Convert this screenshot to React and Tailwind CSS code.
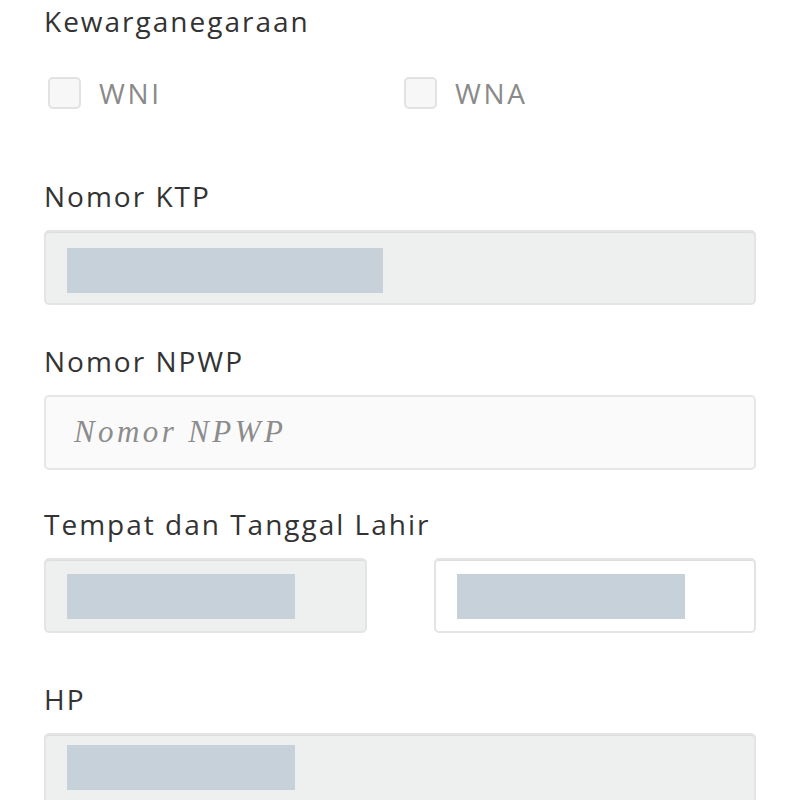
const sans = { fontFamily: '"Open Sans", Lato, sans-serif' };

function Label({ children, className = '' }) {
  return (
    <p className={`text-[28px] leading-[34px] text-[#333333] tracking-[2px] ${className}`}>
      {children}
    </p>
  );
}

function Check({ label }) {
  return (
    <label className="flex items-center gap-[18px] pl-[4px]">
      <span className="w-[33px] h-[32px] rounded-[5px] border-2 border-[#e2e2e2] bg-[#f7f7f7]" />
      <span className="text-[28px] leading-[34px] text-[#8a8a8a] tracking-[2.6px]">{label}</span>
    </label>
  );
}

// gray blocks stand in for the masked values
function Field({ disabled = true, fill, top, className = '' }) {
  return (
    <div
      className={`h-[75px] rounded-[5px] border-2 border-[#e3e4e4] shadow-[inset_0_1px_0_#dcdddd] pl-[21px] ${
        disabled ? 'bg-[#eeefef]' : 'bg-white'
      } ${className}`}
    >
      {fill && <div className="h-[45px] bg-[#c7d1da]" style={{ width: fill, marginTop: top }} />}
    </div>
  );
}

export default function App() {
  return (
    <div className="bg-white w-[800px] h-[800px] overflow-hidden px-[44px] pt-[4px]" style={sans}>
      <Label>Kewarganegaraan</Label>
      <div className="grid grid-cols-2 mt-[38px]">
        <Check label="WNI" />
        <Check label="WNA" />
      </div>

      <Label className="mt-[69px]">Nomor KTP</Label>
      <Field fill={316} top={16} className="mt-[17px]" />

      <Label className="mt-[39px]">Nomor NPWP</Label>
      <div className="mt-[17px] h-[75px] rounded-[5px] border-2 border-[#e5e6e6] bg-[#fafafa] flex items-center pl-[28px]">
        <span
          className="text-[31px] italic text-[#8c8c8c] tracking-[3.4px]"
          style={{ fontFamily: '"Liberation Serif", "DejaVu Serif", serif' }}
        >
          Nomor NPWP
        </span>
      </div>

      <Label className="mt-[37px]">Tempat dan Tanggal Lahir</Label>
      <div className="grid grid-cols-2 gap-[67px] mt-[17px]">
        <Field fill={228} top={14} />
        <Field fill={228} top={14} disabled={false} />
      </div>

      <Label className="mt-[49px]">HP</Label>
      <Field fill={228} top={10} className="mt-[17px]" />
    </div>
  );
}
